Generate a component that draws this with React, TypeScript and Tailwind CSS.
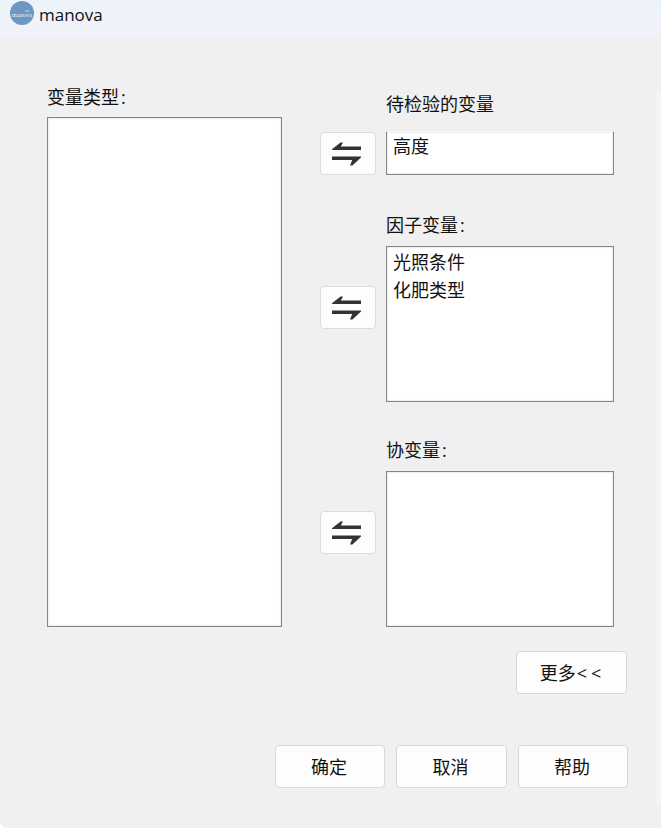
import type { ReactNode } from "react";

const cjk = "font-['Open_Sans','Noto_Sans_CJK_SC',sans-serif]";

function SwapIcon() {
  return (
    <svg width="30" height="24" viewBox="0 0 30 24" fill="#333333">
      <path d="M0 7.2 L8.6 0.6 L11 0.6 L8.8 4.6 L29 4.6 L29 8 L0 8 Z" />
      <path d="M0 14.6 L29 14.6 L29 15.6 L20.4 23.4 L18 23.4 L20.2 18 L0 18 Z" />
    </svg>
  );
}

function SwapButton({ className = "" }: { className?: string }) {
  return (
    <button className={`flex h-[43px] w-[56px] shrink-0 items-center justify-center rounded-[4px] border border-[#dcdcdc] bg-[#fdfdfd] pr-[2px] ${className}`}>
      <SwapIcon />
    </button>
  );
}

function ActionButton({ label, className = "" }: { label: ReactNode; className?: string }) {
  return (
    <button className={`flex h-[43px] items-center justify-center rounded-[4px] border border-[#d8d8d8] bg-[#fdfdfd] pr-[2px] text-[18px] leading-none text-[#111111] ${className}`}>
      {label}
    </button>
  );
}

function ListBox({ items = [], className = "" }: { items?: string[]; className?: string }) {
  return (
    <div className={`w-[228px] border border-[#858585] bg-white px-[6px] text-[18px] leading-[28px] text-[#111111] shadow-[inset_0_0_2px_#c8c8c8] ${className}`}>
      {items.map((item) => (
        <div key={item}>{item}</div>
      ))}
    </div>
  );
}

function Colon() {
  return <span className="ml-[2px]">:</span>;
}

export default function App() {
  return (
    <div className={`flex h-[828px] w-[661px] flex-col overflow-hidden rounded-bl-[8px] bg-[#f0f0f0] ${cjk}`}>
      <header className="flex h-[38px] shrink-0 items-start gap-[5px] bg-gradient-to-b from-[#eef3fb] to-[#f0f3f8] pl-[10px] pt-[1px]">
        <svg width="24" height="24" viewBox="0 0 24 24">
          <circle cx="12" cy="12" r="12" fill="#6b97c2" />
          <rect x="15" y="9.6" width="4.5" height="0.8" fill="#dfe9f3" />
          <text x="12" y="15.6" textAnchor="middle" fontSize="6" textLength="20" lengthAdjust="spacingAndGlyphs" fill="#e6eef6" fontFamily="Liberation Serif, serif">manova</text>
        </svg>
        <span className="text-[17px] leading-[28px] text-[#111111]">manova</span>
      </header>

      <div className="relative flex flex-1 pl-[47px]">
        {/* left column */}
        <div className="flex w-[235px] shrink-0 flex-col pt-[46px]">
          <div className="h-[33px] text-[18px] leading-[26px] text-[#111111]">变量类型<Colon /></div>
          <ListBox className="h-[510px] w-[235px]" />
        </div>

        {/* transfer columns */}
        <div className="ml-[38px] flex w-[308px] shrink-0 flex-col pt-[53px]">
          <div className="h-[40px] pl-[66px] text-[18px] leading-[26px] text-[#111111]">待检验的变量</div>
          <div className="flex gap-[10px]">
            <SwapButton className="mt-[1px]" />
            <ListBox items={["高度"]} className="h-[44px] border-t-[#f8f8f8]" />
          </div>

          <div className="mt-[37px] h-[34px] pl-[66px] text-[18px] leading-[26px] text-[#111111]">因子变量<Colon /></div>
          <div className="flex gap-[10px]">
            <SwapButton className="mt-[40px]" />
            <ListBox items={["光照条件", "化肥类型"]} className="h-[156px] pt-[1px]" />
          </div>

          <div className="mt-[35px] h-[34px] pl-[66px] text-[18px] leading-[26px] text-[#111111]">协变量<Colon /></div>
          <div className="flex gap-[10px]">
            <SwapButton className="mt-[40px]" />
            <ListBox className="h-[156px]" />
          </div>

          <div className="mt-[24px] flex justify-end pr-[1px]">
            <ActionButton label={<>更多<span className="-mr-[4px] ml-[1px] tracking-[4px]">&lt;&lt;</span></>} className="w-[111px]" />
          </div>

          <div className="-ml-[45px] mt-[51px] flex w-[353px] gap-[11px]">
            <ActionButton label="确定" className="w-[110px]" />
            <ActionButton label="取消" className="w-[111px]" />
            <ActionButton label="帮助" className="w-[110px]" />
          </div>
        </div>

        {/* clipped scroll gutter on the right edge */}
        <div className="absolute right-0 top-[53px] h-[714px] w-[5px] bg-[#f4f4f4]" />
      </div>
    </div>
  );
}
